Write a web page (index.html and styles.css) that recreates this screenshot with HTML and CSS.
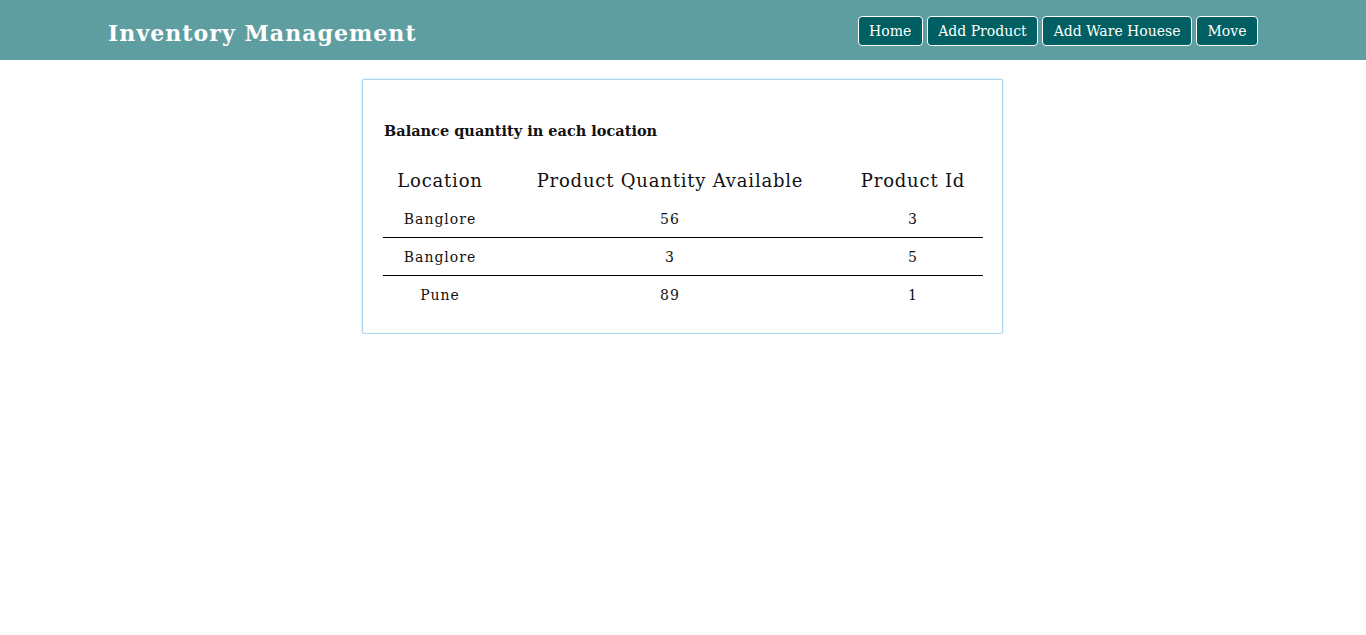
FILE: index.html
```html
<!DOCTYPE html>
<html>
<head>
<meta charset="utf-8">
<title>Inventory Management</title>
<link rel="stylesheet" href="styles.css">
</head>
<body>
<header class="navbar">
  <div class="nav-inner">
    <div class="brand">Inventory Management</div>
    <nav class="nav-links">
      <a class="nav-btn" href="#">Home</a>
      <a class="nav-btn" href="#">Add Product</a>
      <a class="nav-btn" href="#">Add Ware Houese</a>
      <a class="nav-btn" href="#">Move</a>
    </nav>
  </div>
</header>
<main class="content">
  <section class="card">
    <h3 class="card-title">Balance quantity in each location</h3>
    <table class="balance-table">
      <thead>
        <tr>
          <th class="col-loc">Location</th>
          <th class="col-qty">Product Quantity Available</th>
          <th class="col-id">Product Id</th>
        </tr>
      </thead>
      <tbody>
        <tr><td>Banglore</td><td>56</td><td>3</td></tr>
        <tr><td>Banglore</td><td>3</td><td>5</td></tr>
        <tr><td>Pune</td><td>89</td><td>1</td></tr>
      </tbody>
    </table>
  </section>
</main>
</body>
</html>
```

FILE: styles.css
```css
html, body {
  margin: 0;
  padding: 0;
  background: #ffffff;
  font-family: "DejaVu Serif", "Liberation Serif", serif;
  color: #111111;
}

.navbar {
  background: #5f9ea0;
  height: 60px;
}

.nav-inner {
  height: 100%;
  padding: 0 108px;
  display: flex;
  align-items: center;
  justify-content: space-between;
}

.brand {
  color: #ffffff;
  font-size: 22px;
  font-weight: bold;
  letter-spacing: 1.05px;
  padding-top: 6px;
}

.nav-links {
  display: flex;
  gap: 4px;
  padding-top: 1px;
}

.nav-btn {
  display: block;
  background: #005f63;
  color: #ffffff;
  text-decoration: none;
  border: 1px solid #ffffff;
  border-radius: 4px;
  font-size: 14px;
  line-height: 28px;
  padding: 0 10.5px;
}

.content {
  display: flex;
  justify-content: center;
  padding-top: 19px;
}

.card {
  width: 600px;
  margin-right: 1px;
  border: 1px solid #a9d6ec;
  border-radius: 2px;
  box-shadow: 0 0 3px rgba(135, 200, 235, 0.55);
  padding: 42px 19px 20px 20px;
}

.card-title {
  margin: 0 0 21px 1px;
  font-size: 14.5px;
  line-height: 18px;
  font-weight: bold;
}

.balance-table {
  width: 600px;
  border-collapse: collapse;
}

.balance-table th {
  font-weight: normal;
  font-size: 18px;
  letter-spacing: 0.8px;
  height: 39px;
  padding: 0;
  vertical-align: middle;
}

.col-loc { width: 114px; }
.col-qty { width: 346px; }
.col-id { width: 140px; }

.balance-table td {
  text-align: center;
  font-size: 14px;
  letter-spacing: 1px;
  height: 37px;
  padding: 0;
  border-bottom: 1px solid #000000;
}

.balance-table tbody tr:last-child td {
  border-bottom: none;
}
```
